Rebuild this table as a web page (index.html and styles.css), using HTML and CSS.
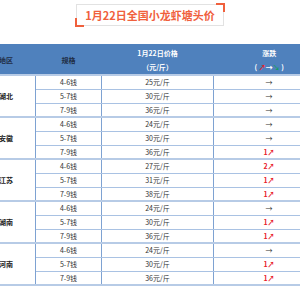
FILE: index.html
```html
<!DOCTYPE html>
<html lang="zh">
<head>
	<meta charset="UTF-8">
	<title>小龙虾塘头价</title>
	<link rel="stylesheet" href="styles.css">
</head>
<body>
	<div class="title-wrap">
		<div class="title">1月22日全国小龙虾塘头价</div>
	</div>

	<div class="table-wrap">
		<table class="price">
			<colgroup>
				<col class="c-area">
				<col class="c-size">
				<col class="c-price">
				<col class="c-trend">
			</colgroup>
			<thead>
				<tr class="head-top">
					<th rowspan="2" class="dark">地区</th>
					<th rowspan="2" class="dark">规格</th>
					<th>1月22日价格</th>
					<th>涨跌</th>
				</tr>
				<tr class="head-bottom">
					<th>（元/斤）</th>
					<th>( <span class="up">↗</span>→<span class="down">↘</span> )</th>
				</tr>
			</thead>
			<tbody>
				<tr class="first"><td rowspan="3" class="area">湖北</td><td>4-6钱</td><td>25元/斤</td><td>→</td></tr>
				<tr><td>5-7钱</td><td>30元/斤</td><td>→</td></tr>
				<tr><td>7-9钱</td><td>36元/斤</td><td>→</td></tr>

				<tr class="first"><td rowspan="3" class="area">安徽</td><td>4-6钱</td><td>24元/斤</td><td>→</td></tr>
				<tr><td>5-7钱</td><td>30元/斤</td><td>→</td></tr>
				<tr><td>7-9钱</td><td>36元/斤</td><td class="rise">1↗</td></tr>

				<tr class="first"><td rowspan="3" class="area">江苏</td><td>4-6钱</td><td>27元/斤</td><td class="rise">2↗</td></tr>
				<tr><td>5-7钱</td><td>31元/斤</td><td class="rise">1↗</td></tr>
				<tr><td>7-9钱</td><td>38元/斤</td><td class="rise">1↗</td></tr>

				<tr class="first"><td rowspan="3" class="area">湖南</td><td>4-6钱</td><td>24元/斤</td><td>→</td></tr>
				<tr><td>5-7钱</td><td>30元/斤</td><td class="rise">1↗</td></tr>
				<tr><td>7-9钱</td><td>36元/斤</td><td class="rise">1↗</td></tr>

				<tr class="first"><td rowspan="3" class="area">河南</td><td>4-6钱</td><td>24元/斤</td><td>→</td></tr>
				<tr><td>5-7钱</td><td>30元/斤</td><td class="rise">1↗</td></tr>
				<tr class="last"><td>7-9钱</td><td>36元/斤</td><td class="rise">1↗</td></tr>
			</tbody>
		</table>
	</div>
</body>
</html>
```

FILE: styles.css
```css
* {
	margin: 0;
	padding: 0;
	box-sizing: border-box;
}
body {
	background-color: white;
	font-family: "Noto Sans CJK SC", "Noto Sans", sans-serif;
	color: #333;
}

/* Title */
.title-wrap {
	padding-top: 4px;
	display: flex;
	justify-content: center;
}
.title {
	position: relative;
	width: 148px;
	height: 22px;
	border: 1px solid #e2e2e2;
	color: #f0603c;
	font-size: 11px;
	font-weight: bold;
	line-height: 20px;
	text-align: center;
}
.title::before,
.title::after {
	content: "";
	position: absolute;
	width: 7px;
	height: 7px;
	border: 0 solid #f0603c;
}
.title::before {
	top: -2px;
	right: -2px;
	border-top-width: 2px;
	border-right-width: 2px;
}
.title::after {
	bottom: -2px;
	left: -2px;
	border-bottom-width: 2px;
	border-left-width: 2px;
}

/* Table */
.table-wrap {
	margin-top: 18px;
	width: 300px;
	overflow: hidden;
}
.price {
	margin-left: -24px;
	width: 348px;
	border-collapse: collapse;
	table-layout: fixed;
	font-size: 7px;
	text-align: center;
}
.c-area { width: 59px; }
.c-size { width: 66px; }
.c-price { width: 112px; }
.c-trend { width: 111px; }

.price th {
	background-color: #4f81bd;
	color: white;
	font-weight: bold;
	border-left: 1px solid #4f81bd;
}
.price .head-top th {
	height: 16px;
	line-height: 13px;
	padding-top: 3px;
}
.price .head-bottom th {
	height: 14px;
	line-height: 14px;
}
.price th.dark {
	color: #1f2d44;
}
.price .up {
	color: #e8202a;
}
.price .down {
	color: #17a05d;
}

.price td {
	height: 14px;
	line-height: 12px;
	border: 1px solid #a9c2e3;
	border-left-color: #7ea2d2;
	border-right-color: #7ea2d2;
}
.price tr.first td {
	border-top: 2px solid #b7cbe6;
}
.price tr.last td {
	border-bottom: 2px solid #b7cbe6;
}
.price td.area {
	font-weight: bold;
	color: #222;
	border-bottom: 2px solid #b7cbe6;
}
.price td.rise {
	color: #e8202a;
	font-weight: bold;
}
```
